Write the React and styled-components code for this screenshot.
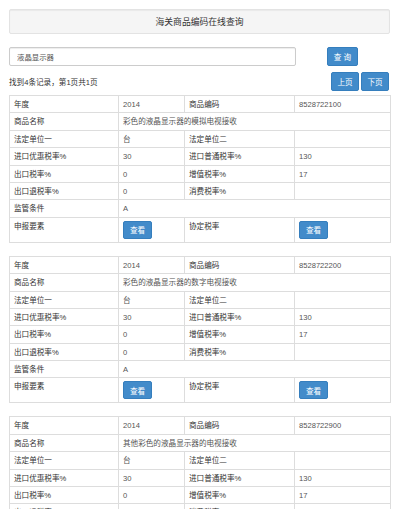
import React from "react";
import styled, { createGlobalStyle } from "styled-components";

const Global = createGlobalStyle`
  html, body { margin: 0; padding: 0; overflow: hidden; background: #fff; }
  body { font-family: "Liberation Sans", "Noto Sans CJK SC", sans-serif; color: #333; }
  * { box-sizing: border-box; }
`;

const Page = styled.div`
  padding: 9px 10px 0 9px;
  width: 400px;
`;

const Well = styled.div`
  height: 25px;
  background: #f5f5f5;
  border: 1px solid #e3e3e3;
  border-radius: 2px;
  box-shadow: inset 0 1px 1px rgba(0, 0, 0, 0.05);
  display: flex;
  align-items: center;
  justify-content: center;
  font-size: 8.8px;
  color: #333;
`;

const SearchRow = styled.div`
  display: flex;
  align-items: center;
  margin-top: 13px;
`;

const Input = styled.input`
  width: 287px;
  height: 19px;
  border: 1px solid #ccc;
  border-radius: 2px;
  padding: 0 7px;
  font-family: inherit;
  font-size: 7.4px;
  color: #555;
  box-shadow: inset 0 1px 1px rgba(0, 0, 0, 0.075);
  outline: none;
`;

const Btn = styled.button`
  height: ${(p) => p.$h || 19}px;
  width: ${(p) => p.$w}px;
  margin-left: ${(p) => p.$ml || 0}px;
  padding: 0;
  border: 1px solid #357ebd;
  border-radius: 2px;
  background: #428bca;
  color: #fff;
  font-family: inherit;
  font-size: 7.6px;
  display: inline-flex;
  align-items: center;
  justify-content: center;
  cursor: pointer;
`;

const InfoRow = styled.div`
  display: flex;
  align-items: center;
  justify-content: space-between;
  margin-top: 6px;
  height: 19px;
`;

const InfoText = styled.span`
  font-size: 7.6px;
  color: #333;
`;

const Pager = styled.div`
  display: flex;
  gap: 2px;
  margin-right: 1px;
`;

const Table = styled.table`
  width: 381px;
  border-collapse: collapse;
  table-layout: fixed;
  margin-top: ${(p) => (p.$first ? 4 : 13)}px;
  font-size: 7.6px;
`;

const Cell = styled.td`
  border: 1px solid #ddd;
  height: 17.4px;
  padding: 4px 4px 0 4px;
  line-height: 9px;
  vertical-align: top;
  color: ${(p) => (p.$label ? "#333" : "#555")};
  white-space: nowrap;
  overflow: hidden;
`;

const ButtonCell = styled(Cell)`
  height: 25px;
  padding-top: ${(p) => (p.$label ? 4 : 3)}px;
`;

const records = [
  { year: "2014", code: "8528722100", name: "彩色的液晶显示器的模拟电视接收" },
  { year: "2014", code: "8528722200", name: "彩色的液晶显示器的数字电视接收" },
  { year: "2014", code: "8528722900", name: "其他彩色的液晶显示器的电视接收" },
];

function Record({ r, first }) {
  return (
    <Table $first={first}>
      <colgroup>
        <col style={{ width: 109 }} />
        <col style={{ width: 66 }} />
        <col style={{ width: 110 }} />
        <col style={{ width: 96 }} />
      </colgroup>
      <tbody>
        <tr>
          <Cell $label>年度</Cell>
          <Cell>{r.year}</Cell>
          <Cell $label>商品编码</Cell>
          <Cell>{r.code}</Cell>
        </tr>
        <tr>
          <Cell $label>商品名称</Cell>
          <Cell colSpan={3}>{r.name}</Cell>
        </tr>
        <tr>
          <Cell $label>法定单位一</Cell>
          <Cell>台</Cell>
          <Cell $label>法定单位二</Cell>
          <Cell></Cell>
        </tr>
        <tr>
          <Cell $label>进口优惠税率%</Cell>
          <Cell>30</Cell>
          <Cell $label>进口普通税率%</Cell>
          <Cell>130</Cell>
        </tr>
        <tr>
          <Cell $label>出口税率%</Cell>
          <Cell>0</Cell>
          <Cell $label>增值税率%</Cell>
          <Cell>17</Cell>
        </tr>
        <tr>
          <Cell $label>出口退税率%</Cell>
          <Cell>0</Cell>
          <Cell $label>消费税率%</Cell>
          <Cell></Cell>
        </tr>
        <tr>
          <Cell $label>监管条件</Cell>
          <Cell colSpan={3}>A</Cell>
        </tr>
        <tr>
          <ButtonCell $label>申报要素</ButtonCell>
          <ButtonCell>
            <Btn $w={29} $h={18}>查看</Btn>
          </ButtonCell>
          <ButtonCell $label>协定税率</ButtonCell>
          <ButtonCell>
            <Btn $w={29} $h={18}>查看</Btn>
          </ButtonCell>
        </tr>
      </tbody>
    </Table>
  );
}

export default function App() {
  return (
    <>
      <Global />
      <Page>
        <Well>海关商品编码在线查询</Well>
        <SearchRow>
          <Input defaultValue="液晶显示器" />
          <Btn $w={31} $ml={31}>查 询</Btn>
        </SearchRow>
        <InfoRow>
          <InfoText>找到4条记录，第1页共1页</InfoText>
          <Pager>
            <Btn $w={28}>上页</Btn>
            <Btn $w={28}>下页</Btn>
          </Pager>
        </InfoRow>
        {records.map((r, i) => (
          <Record key={r.code} r={r} first={i === 0} />
        ))}
      </Page>
    </>
  );
}
